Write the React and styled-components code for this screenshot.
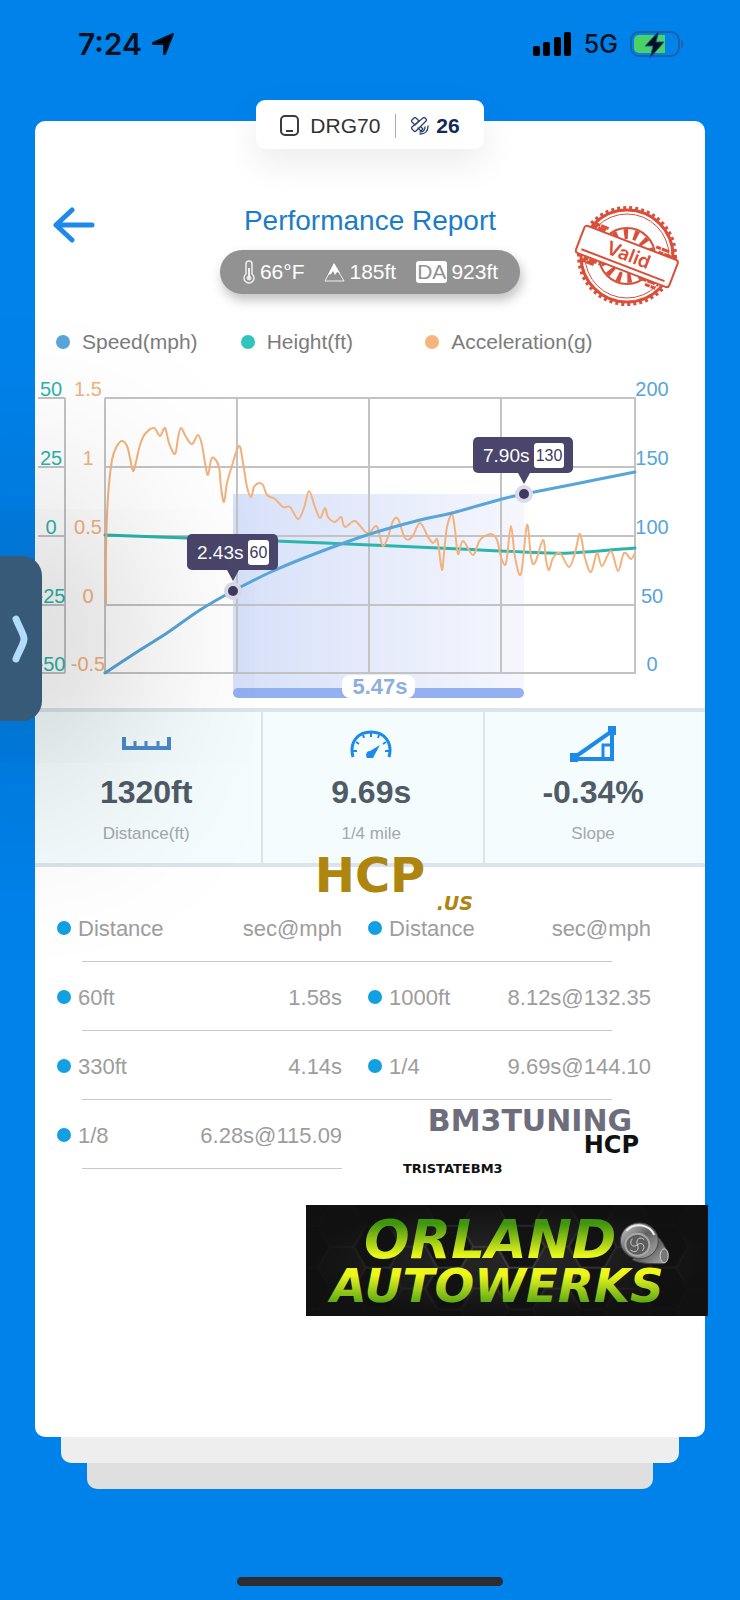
import React from 'react';
import styled, { createGlobalStyle } from 'styled-components';

const theme = {
	blue: '#0082eb',
	accent: '#1e8ae8',
	title: '#1b7cc8',
	speed: '#57a5d9',
	height: '#2cb5ab',
	accel: '#f3b27c',
	grid: '#c3c3c3',
	tooltip: '#4a466b',
	gold: '#ad850f',
	sans: '"Liberation Sans", Arial, sans-serif',
	logo: '"DejaVu Sans", Verdana, sans-serif',
};

const speedPoints = [
	[0, 275], [35, 252], [62, 235], [95, 212], [128, 193], [168, 173], [212, 155],
	[265, 136], [315, 122], [347, 115], [397, 101], [419, 96], [465, 87], [530, 74],
];

const heightPoints = [
	[0, 137], [82, 140], [170, 143], [265, 147], [355, 151], [418, 154], [465, 155], [530, 150],
];

const accelPoints = [
	[1, 205], [1, 152], [3, 99], [7, 62], [12, 48], [17, 43], [22, 48], [25, 60], [28, 73],
	[31, 64], [35, 47], [40, 36], [49, 30], [55, 38], [60, 30], [64, 45], [70, 56], [73, 40],
	[76, 30], [81, 39], [87, 46], [93, 37], [97, 47], [100, 65], [103, 77], [106, 62],
	[109, 60], [114, 69], [116, 89], [119, 104], [122, 85], [126, 71], [134, 48], [138, 65],
	[142, 89], [146, 99], [149, 89], [154, 85], [158, 87], [162, 97], [170, 101], [178, 109],
	[185, 109], [193, 121], [199, 110], [204, 93], [210, 109], [215, 120], [220, 110],
	[223, 119], [230, 124], [236, 119], [240, 129], [250, 123], [262, 135], [271, 128],
	[274, 135], [278, 148], [283, 139], [288, 123], [293, 121], [300, 140], [307, 139],
	[315, 125], [323, 139], [328, 145], [332, 141], [334, 152], [337, 172], [339, 155],
	[342, 129], [347, 116], [350, 132], [353, 156], [358, 143], [368, 157], [375, 142],
	[386, 136], [392, 142], [396, 159], [400, 167], [402, 159], [406, 128], [410, 159],
	[416, 176], [422, 127], [426, 159], [430, 165], [438, 142], [441, 162], [444, 172],
	[448, 160], [455, 155], [464, 169], [470, 155], [475, 136], [480, 160], [486, 174],
	[492, 155], [497, 168], [506, 153], [513, 173], [519, 155], [526, 161], [530, 155],
];

const rows = [
	['60ft', '1.58s', '1000ft', '8.12s@132.35'],
	['330ft', '4.14s', '1/4', '9.69s@144.10'],
	['1/8', '6.28s@115.09'],
];

const smoothPath = (points) => {
	let d = `M${points[0][0]} ${points[0][1]}`;
	for (let i = 0; i < points.length - 1; i++) {
		const p0 = points[i - 1] || points[i];
		const p1 = points[i];
		const p2 = points[i + 1];
		const p3 = points[i + 2] || p2;
		d += ` C${p1[0] + (p2[0] - p0[0]) / 6} ${p1[1] + (p2[1] - p0[1]) / 6}`;
		d += ` ${p2[0] - (p3[0] - p1[0]) / 6} ${p2[1] - (p3[1] - p1[1]) / 6} ${p2[0]} ${p2[1]}`;
	}
	return d;
};

const StatusIcons = () => (
	<StatusRight>
		<svg width="39" height="24" viewBox="0 0 39 24" aria-hidden="true">
			<rect x="0" y="14" width="7" height="10" rx="2" />
			<rect x="10" y="10" width="7" height="14" rx="2" />
			<rect x="21" y="5" width="7" height="19" rx="2" />
			<rect x="31" y="0" width="7" height="24" rx="2" />
		</svg>
		<Network>5G</Network>
		<svg width="55" height="28" viewBox="0 0 55 28" aria-hidden="true">
			<rect x="1" y="2" width="48" height="24" rx="8" fill="none" stroke="#1d61a8" strokeWidth="2" />
			<path d="M51 10c3 1 3 7 0 8z" fill="#1d61a8" />
			<path d="M9 5h26v18H9a5 5 0 0 1-5-5v-8a5 5 0 0 1 5-5z" fill="#4bd267" />
			<path d="M29 1 15 16h8l-3 12 14-16h-8z" fill="#08111d" stroke="#0b5ca8" strokeWidth="1" />
		</svg>
	</StatusRight>
);

const Stamp = () => (
	<StampSvg viewBox="0 0 104 104" role="img" aria-label="Valid">
		<g fill="none" stroke="#d94f39">
			<circle cx="52" cy="51" r="48" strokeWidth="4" strokeDasharray="3 3" />
			<circle cx="52" cy="51" r="46" strokeWidth="3" />
			<circle cx="52" cy="51" r="42" strokeWidth="1" />
			<circle cx="52" cy="51" r="28" strokeWidth="2" />
			<circle cx="52" cy="51" r="22" strokeWidth="10" strokeDasharray="4 6" />
		</g>
		<g transform="rotate(21 52 51)">
			<path d="M11 32h16M76 32h17M9 35h14M80 36h14M12 68h18M74 67h18M10 71h14M79 71h11" stroke="#d94f39" strokeWidth="3" strokeDasharray="5 1 8 2" />
			<rect x="2" y="37" width="100" height="29" rx="3" fill="#fff" stroke="#d94f39" strokeWidth="2" />
			<path d="M7 61h89" stroke="#d94f39" strokeWidth="2" />
			<text x="53" y="56" textAnchor="middle" fontFamily="Inter, sans-serif" fontSize="19" fontWeight="600" fill="#d94f39">Valid</text>
		</g>
	</StampSvg>
);

const Tooltip = ({ x, y, left, width, time, speed }) => (
	<g>
		<circle cx={x} cy={y} r="9" fill="#dcdae8" />
		<circle cx={x} cy={y} r="5" fill="#3f3b60" />
		<rect x={left} y={y - 57} width={width} height="36" rx="5" fill={theme.tooltip} />
		<path d={`M${x - 6} ${y - 21}h12l-6 11z`} fill={theme.tooltip} />
		<text x={left + 10} y={y - 32} fontSize="19" fill="#fff">{time}</text>
		<rect x={left + 61} y={y - 51} width={width - 70} height="25" rx="3" fill="#fff" />
		<text x={left + 61 + (width - 70) / 2} y={y - 33} fontSize="16" textAnchor="middle" fill="#3f3b60">{speed}</text>
	</g>
);

const Chart = () => {
	const lines = [0, 69, 138, 207, 275];
	return (
		<ChartSvg viewBox="-70 -30 670 340" role="img" aria-label="Speed, height and acceleration">
			<defs>
				<linearGradient id="range">
					<stop offset="0" stopColor="#cfdbf8" />
					<stop offset="1" stopColor="#f4f5fd" />
				</linearGradient>
			</defs>
			<rect x="128" y="96" width="291" height="198" fill="url(#range)" opacity="0.85" />
			<g stroke={theme.grid} strokeWidth="2">
				{lines.map((y) => <path key={y} d={`M0 ${y}H531M-67 ${y}H-40`} />)}
				{[0, 132, 264, 396, 530].map((x) => <path key={x} d={`M${x} 0V275`} />)}
				<path d="M-40 0V275" />
			</g>
			<g fontSize="20" textAnchor="middle">
				{['50', '25', '0', '-25', '-50'].map((t, i) => (
					<text key={t} x="-54" y={lines[i] - 2} fill={theme.height}>{t}</text>
				))}
				{['1.5', '1', '0.5', '0', '-0.5'].map((t, i) => (
					<text key={t} x="-17" y={lines[i] - 2} fill={theme.accel}>{t}</text>
				))}
				{['200', '150', '100', '50', '0'].map((t, i) => (
					<text key={t} x="547" y={lines[i] - 2} fill={theme.speed}>{t}</text>
				))}
			</g>
			<g fill="none" strokeLinecap="round" strokeLinejoin="round">
				<path d={smoothPath(heightPoints)} stroke={theme.height} strokeWidth="3" />
				<path d={smoothPath(accelPoints)} stroke={theme.accel} strokeWidth="2" />
				<path d={smoothPath(speedPoints)} stroke={theme.speed} strokeWidth="3" />
			</g>
			<rect x="128" y="290" width="291" height="10" rx="5" fill="#93b0f1" />
			<rect x="237" y="277" width="73" height="23" rx="8" fill="#fff" />
			<text x="275" y="296" fontSize="22" fontWeight="700" textAnchor="middle" fill="#8eaedb">5.47s</text>
			<Tooltip x={128} y={193} left={82} width={91} time="2.43s" speed="60" />
			<Tooltip x={419} y={96} left={368} width={100} time="7.90s" speed="130" />
		</ChartSvg>
	);
};

const RulerIcon = () => (
	<svg width="49" height="14" viewBox="0 0 49 14" fill="none" stroke="#4a8bcb" aria-hidden="true">
		<path d="M2 0v11h45V0" strokeWidth="4" />
		<path d="M13 4v6M24 4v6M36 4v6" strokeWidth="3" />
	</svg>
);

const GaugeIcon = () => (
	<svg width="42" height="28" viewBox="0 0 42 28" fill="none" stroke={theme.accent} aria-hidden="true">
		<path d="M3 27C-1 12 8 2 21 2s22 10 18 25" strokeWidth="3" />
		<path d="M3 21h4M35 21h4M6 12l3 2M36 12l-3 2M13 5l1 3M29 5l-1 3M21 2v5" strokeWidth="2" />
		<path d="M30 15 20 21a4 4 0 1 0 4 5z" fill={theme.accent} stroke="none" />
	</svg>
);

const SlopeIcon = () => (
	<svg width="46" height="36" viewBox="0 0 46 36" fill="none" stroke={theme.accent} aria-hidden="true">
		<path d="M5 31 42 5v28H5" strokeWidth="4" />
		<path d="M41 19h-8v14" strokeWidth="3" />
		<path d="M38 0h8v9h-8zM0 27h8v9H0z" fill={theme.accent} stroke="none" />
	</svg>
);

const stats = [
	{ icon: <RulerIcon />, value: '1320ft', label: 'Distance(ft)' },
	{ icon: <GaugeIcon />, value: '9.69s', label: '1/4 mile' },
	{ icon: <SlopeIcon />, value: '-0.34%', label: 'Slope' },
];

const SponsorBanner = () => (
	<Banner viewBox="0 0 404 112" role="img" aria-label="Orlando Autowerks">
		<defs>
			<linearGradient id="top" x1="0" y1="0" x2="0" y2="1">
				<stop offset="0.25" stopColor="#3f9410" />
				<stop offset="0.75" stopColor="#e6f51c" />
			</linearGradient>
			<linearGradient id="bottom" x1="0" y1="0" x2="0" y2="1">
				<stop offset="0.3" stopColor="#eef71c" />
				<stop offset="0.8" stopColor="#5fab16" />
			</linearGradient>
			<linearGradient id="metal" x1="0" y1="0" x2="1" y2="1">
				<stop offset="0" stopColor="#d5d5d5" />
				<stop offset="0.5" stopColor="#5f5f5f" />
				<stop offset="1" stopColor="#b5b5b5" />
			</linearGradient>
			<pattern id="hex" width="72" height="42" patternUnits="userSpaceOnUse">
				<path d="M0 21h12L24 0h24l12 21h12M12 21l12 21h24l12-21" fill="#242424" stroke="#3c3c3c" strokeWidth="2" />
			</pattern>
			<radialGradient id="fade">
				<stop offset="0.2" stopColor="#111" stopOpacity="0" />
				<stop offset="1" stopColor="#101010" stopOpacity="0.95" />
			</radialGradient>
		</defs>
		<rect width="404" height="112" fill="#131313" />
		<rect width="404" height="112" fill="url(#hex)" />
		<rect width="404" height="112" fill="url(#fade)" />
		<g fontFamily={theme.logo} fontWeight="700" fontStyle="italic">
			<text x="312" y="53" fontSize="54" textAnchor="end" fill="url(#top)">ORLAND</text>
			<text x="192" y="97" fontSize="47" textAnchor="middle" fill="url(#bottom)">AUTOWERKS</text>
		</g>
		<g stroke="#454545">
			<path d="M350 30c8 4 10 12 13 16s0 12-4 13c-12 0-24 0-31-4z" fill="url(#metal)" />
			<ellipse cx="335" cy="36" rx="19" ry="18" fill="url(#metal)" />
			<ellipse cx="333" cy="40" rx="12" ry="11" fill="#5d5d5d" stroke="#a9a9a9" strokeWidth="2" />
			<path d="M333 40c-2-6 3-9 7-5M333 40c5-4 9 2 5 6M333 40c3 6-3 9-7 5M333 40c-5 4-9-2-5-6" fill="none" stroke="#ccc" />
			<path d="M322 26c8-9 23-7 28 4" fill="none" stroke="#efefef" strokeWidth="2" />
			<ellipse cx="360" cy="51" rx="4" ry="7" fill="#777" stroke="#ccc" />
		</g>
	</Banner>
);

const App = () => (
	<Page>
		<GlobalStyle />
		<StatusBar>
			<Clock>
				7:24
				<svg width="24" height="24" viewBox="0 0 24 24" stroke="#08111d" strokeWidth="2" strokeLinejoin="round" aria-hidden="true">
					<path d="M22 2 14 22h-1V12H2v-1z" />
				</svg>
			</Clock>
			<StatusIcons />
		</StatusBar>

		<Card>
			<DeviceTab>
				<svg width="19" height="21" viewBox="0 0 19 21" fill="none" stroke="#3c3c3c" strokeWidth="2" aria-hidden="true">
					<rect x="1" y="1" width="17" height="19" rx="4" />
					<path d="M6 16h7" />
				</svg>
				<span>DRG70</span>
				<TabDivider />
				<Satellites>
					<svg width="18" height="18" viewBox="0 0 18 18" fill="none" stroke="#2a4370" strokeWidth="1.3" strokeLinejoin="round" strokeLinecap="round" aria-hidden="true">
						<path d="M6 6 4 8 1 5Q0 4 1 3l2-2q1-1 2 0l3 3zM10 10l2 2-2 2-3-3" />
						<path d="M12 1q1-1 2 0l1 1q1 1 0 2L5 14q-1 1-2 0l-2-2q-1-1 0-2z" />
						<path d="M9 15q5 0 5-5M9 17q8 0 8-8" />
					</svg>
					26
				</Satellites>
			</DeviceTab>

			<Header>
				<BackButton type="button" aria-label="Back">
					<svg width="42" height="36" viewBox="0 0 42 36" fill="none" stroke={theme.accent} strokeWidth="5" strokeLinecap="round" strokeLinejoin="round" aria-hidden="true">
						<path d="M39 18H3M19 3 3 18l16 15" />
					</svg>
				</BackButton>
				<Heading>
					<Title>Performance Report</Title>
					<Conditions>
						<Condition>
							<svg width="14" height="24" viewBox="0 0 14 24" fill="none" stroke="#eee" aria-hidden="true">
								<path d="M4 14V4a3 3 0 0 1 6 0v10a5 5 0 1 1-6 0z" strokeWidth="1.5" />
								<path d="M7 8v10" strokeWidth="2" />
								<circle cx="7" cy="18" r="2" fill="#eee" />
							</svg>
							66°F
						</Condition>
						<Condition>
							<svg width="21" height="20" viewBox="0 0 21 20" aria-hidden="true">
								<path d="M10 2 20 19H1z" fill="none" stroke="#eee" />
								<path d="M10 1 16 11l-3-1-2 3-2-4-2 3-3 1z" fill="#fff" />
							</svg>
							185ft
						</Condition>
						<Condition>
							<Density>DA</Density>
							923ft
						</Condition>
					</Conditions>
				</Heading>
				<Stamp />
			</Header>

			<Legend>
				<LegendItem $color={theme.speed}>Speed(mph)</LegendItem>
				<LegendItem $color="#2fc5bd">Height(ft)</LegendItem>
				<LegendItem $color="#f7b57d">Acceleration(g)</LegendItem>
			</Legend>

			<Chart />

			<Stats>
				{stats.map(({ icon, value, label }) => (
					<Stat key={label}>
						<StatIcon>{icon}</StatIcon>
						<StatValue>{value}</StatValue>
						<StatLabel>{label}</StatLabel>
					</Stat>
				))}
				<GoldLogo>
					<GoldName>HCP</GoldName>
					<GoldSuffix>.US</GoldSuffix>
				</GoldLogo>
			</Stats>

			<Results>
				<Table>
					<thead>
						<Row>
							<DistanceHead scope="col">Distance</DistanceHead>
							<TimeHead scope="col">sec@mph</TimeHead>
							<DistanceHead scope="col">Distance</DistanceHead>
							<TimeHead scope="col">sec@mph</TimeHead>
						</Row>
					</thead>
					<tbody>
						{rows.map(([left, leftTime, right, rightTime]) => (
							<Row key={left} $half={!right}>
								<Distance>{left}</Distance>
								<Time>{leftTime}</Time>
								{right && <Distance>{right}</Distance>}
								{right && <Time>{rightTime}</Time>}
							</Row>
						))}
					</tbody>
				</Table>
				<TunerLogos>
					<Tuning>BM3TUNING</Tuning>
					<TunerHcp>HCP</TunerHcp>
					<Tristate>TRISTATEBM3</Tristate>
				</TunerLogos>
			</Results>

			<SponsorBanner />
		</Card>

		<Layer $inset={61} $color="#eeeeee" />
		<Layer $inset={87} $color="#dfdfdf" />
		<HomeBar />

		<Drawer type="button" aria-label="Open panel">
			<svg width="18" height="48" viewBox="0 0 18 48" fill="none" stroke="#b3dbfc" strokeWidth="7" strokeLinecap="round" strokeLinejoin="round" aria-hidden="true">
				<path d="M4 4c3 8 8 15 8 20S7 36 4 44" />
			</svg>
		</Drawer>
	</Page>
);

export default App;

const GlobalStyle = createGlobalStyle`
	* {
		box-sizing: border-box;
	}

	body {
		margin: 0;
		background: ${theme.blue};
		font-family: ${theme.sans};
	}

	svg {
		display: block;
		flex-shrink: 0;
	}
`;

const Page = styled.div`
	position: relative;
	min-height: 100vh;
	display: flex;
	flex-direction: column;
	overflow: hidden;
	background: ${theme.blue};
`;

const StatusBar = styled.header`
	height: 121px;
	padding: 30px 55px 0 78px;
	display: flex;
	justify-content: space-between;
	align-items: flex-start;
	font-family: Inter, sans-serif;
	color: #08111d;
`;

const Clock = styled.div`
	display: flex;
	align-items: center;
	gap: 9px;
	font-size: 30px;
	font-weight: 600;
	line-height: 28px;
`;

const StatusRight = styled.div`
	display: flex;
	align-items: center;
	gap: 12px;
	line-height: 28px;
`;

const Network = styled.span`
	font-size: 25px;
	font-weight: 500;
`;

const Card = styled.main`
	position: relative;
	flex: 1;
	margin: 0 35px;
	padding: 84px 0 120px;
	border-radius: 10px;
	background: #fff;
`;

const DeviceTab = styled.div`
	position: absolute;
	top: -21px;
	left: 50%;
	transform: translateX(-50%);
	width: 228px;
	height: 49px;
	padding-top: 2px;
	display: flex;
	align-items: center;
	justify-content: center;
	gap: 11px;
	border-radius: 9px;
	background: #fff;
	box-shadow: 0 14px 36px rgba(0, 0, 0, 0.08);
	font-size: 21px;
	color: #333;
`;

const TabDivider = styled.span`
	width: 1px;
	height: 24px;
	margin: 0 4px;
	background: #aaa;
`;

const Satellites = styled.span`
	display: flex;
	align-items: center;
	gap: 7px;
	font-weight: 700;
	color: #10295c;
`;

const Header = styled.div`
	padding: 0 18px;
	display: grid;
	grid-template-columns: 1fr auto 1fr;
	align-items: start;
`;

const BackButton = styled.button`
	justify-self: start;
	margin-top: 2px;
	padding: 0;
	border: 0;
	background: none;
	cursor: pointer;
`;

const Heading = styled.div`
	display: flex;
	flex-direction: column;
	align-items: center;
	gap: 13px;
`;

const Title = styled.h1`
	margin: 0;
	font-size: 28px;
	font-weight: 400;
	line-height: 32px;
	color: ${theme.title};
`;

const Conditions = styled.div`
	height: 44px;
	padding: 0 22px;
	display: flex;
	align-items: center;
	gap: 20px;
	border-radius: 22px;
	background: #929292;
	box-shadow: 2px 6px 12px rgba(0, 0, 0, 0.25);
	font-size: 21px;
	color: #fff;
`;

const Condition = styled.span`
	display: flex;
	align-items: center;
	gap: 4px;
`;

const Density = styled.span`
	padding: 0 1px;
	border-radius: 3px;
	background: #fff;
	line-height: 22px;
	color: #929292;
`;

const StampSvg = styled.svg`
	justify-self: end;
	width: 104px;
	margin-right: 8px;
`;

const Legend = styled.ul`
	margin: 0;
	padding: 21px 95px 14px 21px;
	display: grid;
	grid-template-columns: repeat(3, 1fr);
	list-style: none;
`;

const LegendItem = styled.li`
	display: flex;
	align-items: center;
	gap: 12px;
	font-size: 21px;
	line-height: 24px;
	white-space: nowrap;
	color: #7c7c7c;

	&::before {
		content: '';
		width: 14px;
		height: 14px;
		border-radius: 50%;
		background: ${({ $color }) => $color};
	}
`;

const ChartSvg = styled.svg`
	width: 100%;
	height: auto;
	font-family: ${theme.sans};
`;

const Stats = styled.section`
	position: relative;
	display: grid;
	grid-template-columns: 1.02fr 1fr 1fr;
	border-top: 4px solid #dae4ea;
	border-bottom: 4px solid #dae4ea;
	background: #f4fcfe;
`;

const Stat = styled.div`
	padding: 14px 4px 19px 0;
	display: flex;
	flex-direction: column;
	align-items: center;

	& + & {
		border-left: 2px solid #dae4ea;
	}
`;

const StatIcon = styled.div`
	height: 36px;
	display: flex;
	align-items: center;
`;

const StatValue = styled.strong`
	margin-top: 10px;
	font-size: 32px;
	line-height: 40px;
	color: #4f5b66;
`;

const StatLabel = styled.span`
	margin-top: 12px;
	font-size: 17px;
	line-height: 20px;
	color: #a3a8aa;
`;

const GoldLogo = styled.div`
	position: absolute;
	top: 143px;
	left: 50%;
	transform: translateX(-50%);
	width: 206px;
	display: flex;
	flex-direction: column;
	font-family: ${theme.logo};
	font-weight: 700;
	color: ${theme.gold};
`;

const GoldName = styled.span`
	text-align: center;
	font-size: 48px;
	line-height: 40px;
`;

const GoldSuffix = styled.span`
	align-self: flex-end;
	font-size: 19px;
	font-style: italic;
	line-height: 16px;
`;

const Results = styled.section`
	position: relative;
	padding: 26px 54px 0 22px;
`;

const Table = styled.table`
	width: 100%;
	table-layout: fixed;
	border-collapse: collapse;
	font-size: 22px;
	color: #9d9d9d;
`;

const Row = styled.tr`
	height: 69px;
	background: linear-gradient(#c9c9c9, #c9c9c9) 25px 100% no-repeat;
	background-size: ${({ $half }) => ($half ? 'calc(50% - 25px)' : 'calc(100% - 64px)')} 1px;
`;

const Distance = styled.td`
	width: 20%;
	padding: 3px 0 0;
	text-align: left;
	font-weight: 400;

	&:nth-child(3) {
		width: 24%;
		padding-left: 26px;
	}

	&::before {
		content: '';
		display: inline-block;
		width: 14px;
		height: 14px;
		margin-right: 7px;
		border-radius: 50%;
		background: #12a0e2;
		vertical-align: 1px;
	}
`;

const DistanceHead = styled(Distance).attrs({ as: 'th' })``;

const Time = styled.td`
	width: 28%;
	padding: 3px 0 0;
	text-align: right;
	font-weight: 400;
`;

const TimeHead = styled(Time).attrs({ as: 'th' })``;

const TunerLogos = styled.div`
	position: absolute;
	right: 48px;
	bottom: -8px;
	width: 254px;
	display: flex;
	flex-direction: column;
	font-family: ${theme.logo};
	font-weight: 700;
	color: #111;
`;

const Tuning = styled.span`
	font-size: 30px;
	line-height: 24px;
	text-align: center;
	color: #6e6d7c;
`;

const TunerHcp = styled.span`
	align-self: flex-end;
	margin-right: 18px;
	font-size: 24px;
	line-height: 24px;
`;

const Tristate = styled.span`
	margin-top: 4px;
	font-size: 13px;
	line-height: 16px;
`;

const Banner = styled.svg`
	width: 60%;
	margin: 36px -3px 0 auto;
`;

const Layer = styled.div`
	height: 26px;
	margin: 0 ${({ $inset }) => $inset}px;
	border-radius: 0 0 10px 10px;
	background: ${({ $color }) => $color};
`;

const HomeBar = styled.div`
	width: 36%;
	height: 9px;
	margin: 88px auto 14px;
	border-radius: 5px;
	background: #2d2c33;
`;

const Drawer = styled.button`
	position: absolute;
	top: 556px;
	left: 0;
	width: 42px;
	height: 165px;
	padding: 0 0 0 12px;
	border: 0;
	border-radius: 0 20px 20px 0;
	background: #375a78;
	box-shadow: 0 0 200px 50px rgba(0, 0, 0, 0.28);
	cursor: pointer;
`;
